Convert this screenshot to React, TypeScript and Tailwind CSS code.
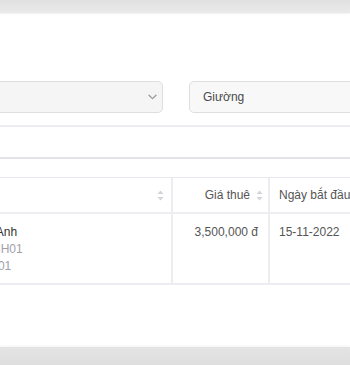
import React from "react";

function SortIcon() {
  return (
    <svg width="7" height="11" viewBox="0 0 7 11" className="shrink-0">
      <path d="M3.5 0.5 L6.5 4 L0.5 4 Z" fill="#d4d4d8" />
      <path d="M3.5 10.5 L6.5 7 L0.5 7 Z" fill="#d4d4d8" />
    </svg>
  );
}

function Chevron() {
  return (
    <svg width="9" height="6" viewBox="0 0 9 6">
      <path d="M1 1.2 L4.5 4.6 L8 1.2" fill="none" stroke="#9a9a9a" strokeWidth="1.3" strokeLinecap="round" strokeLinejoin="round" />
    </svg>
  );
}

export default function App() {
  return (
    <div
      className="w-[350px] h-[365px] overflow-hidden flex flex-col bg-white"
      style={{ fontFamily: '"Liberation Sans", Arial, sans-serif' }}
    >
      <div className="h-[13px] shrink-0 bg-gradient-to-b from-[#e0e0e0] to-[#eaeaea] shadow-[0_1px_2px_rgba(0,0,0,0.06)]" />
      <div className="flex-1 flex flex-col -ml-[200px] w-[700px]">
        <div className="h-[68px] shrink-0" />
        <div className="flex gap-[26px] h-[32px]">
          <div className="w-[363px] h-[32px] rounded-[5px] border border-[#dedee2] bg-[#f5f5f6] flex items-center justify-end pr-[5px]">
            <Chevron />
          </div>
          <div className="w-[300px] h-[32px] rounded-[5px] border border-[#dedee2] bg-[#f8f8f9] flex items-center pl-[13px] text-[12px] text-[#4a4a4a]">
            Giường
          </div>
        </div>
        <div className="h-[12px] shrink-0" />
        <div className="border-t-[2px] border-[#ececf1] h-[32px] shrink-0" />
        <div className="border-t-[2px] border-[#e2e2e8] h-[20px] shrink-0" />
        <div className="border-t border-l border-[#e8e8ee]">
          <div className="flex h-[36px] border-b-[2px] border-[#eeeef2] text-[12px] text-[#555]">
            <div className="w-[372px] flex items-center justify-end pr-[7px] border-r-[2px] border-[#ececf1]">
              <SortIcon />
            </div>
            <div className="w-[97px] flex items-center justify-end gap-[6px] pr-[5px] border-r-[2px] border-[#ececf1]">
              <span>Giá thuê</span>
              <SortIcon />
            </div>
            <div className="flex-1 flex items-center pl-[9px] whitespace-nowrap">Ngày bắt đầu</div>
          </div>
          <div className="flex h-[71px] border-b-[2px] border-[#ececf1] text-[12px]">
            <div className="w-[372px] border-r-[2px] border-[#ececf1] pt-[10px] pl-[131px] leading-[17px] whitespace-nowrap">
              <div className="text-[#333]">Nguyễn Thị Anh</div>
              <div className="text-[#a0a0a8]">Mã phòng: CH01</div>
              <div className="text-[#a0a0a8]">Giường: GH01</div>
            </div>
            <div className="w-[97px] border-r-[2px] border-[#ececf1] pt-[10px] pr-[10px] text-right text-[#555] leading-[17px] whitespace-nowrap">
              3,500,000 đ
            </div>
            <div className="flex-1 pt-[10px] pl-[9px] text-[#555] leading-[17px]">15-11-2022</div>
          </div>
        </div>
      </div>
      <div className="h-[18px] shrink-0 bg-gradient-to-b from-[#e4e4e4] to-[#dedede] shadow-[0_-1px_2px_rgba(0,0,0,0.05)]" />
    </div>
  );
}
